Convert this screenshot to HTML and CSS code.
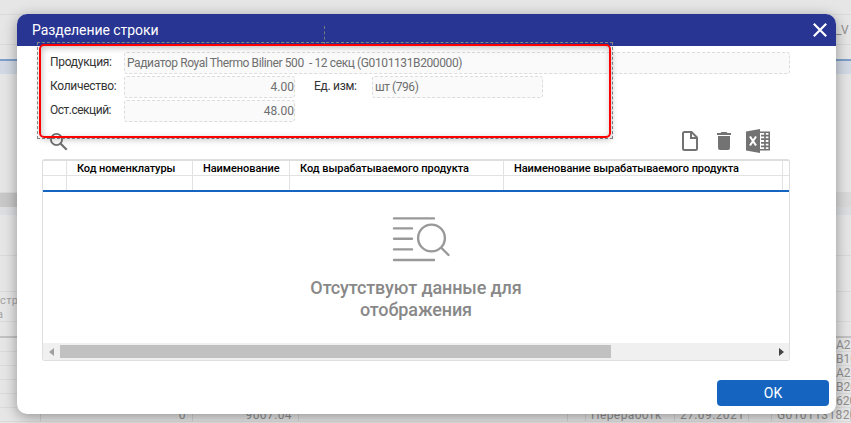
FILE: index.html
```html
<!DOCTYPE html>
<html lang="ru">
<head>
<meta charset="utf-8">
<title>Разделение строки</title>
<link rel="stylesheet" href="styles.css">
</head>
<body>
<div class="page">
  <div class="r r-top"></div>
  <div class="r r-head"><span class="push">_V</span></div>
  <div class="r r-sub"></div>
  <div class="r r-blue"></div>
  <div class="r r-sel"></div>
  <div class="r r-space"></div>
  <div class="r r-scroll"><i></i></div>
  <div class="r r-tint"></div>
  <div class="r r-a"></div>
  <div class="r r-b"></div>
  <div class="r r-c"><p>стр<br><span>а</span></p></div>
  <div class="r r-d"></div>
  <div class="r r-e"><span class="push">A2</span></div>
  <div class="r r-e"><span class="push">B10</span></div>
  <div class="r r-e"><span class="push">A2</span></div>
  <div class="r r-e"><span class="push">B20</span></div>
  <div class="r r-e"><span class="push">620</span></div>
  <div class="r r-last"><span></span><span>0</span><span>9007.04</span><span></span><span></span><span class="start">Переработк</span><span class="start">27.09.2021</span><span></span><span class="start">G0101131820</span></div>
  <div class="r r-end"></div>
</div>

<div class="modal">
  <header class="bar">
    <h1>Разделение строки</h1>
    <svg width="16" height="16" viewBox="0 0 16 16"><path d="M1.8 1.8 14.2 14.2M14.2 1.8 1.8 14.2" stroke="#fff" stroke-width="2.2"/></svg>
  </header>
  <div class="form">
    <div class="line"><label class="l1">Продукция:</label><div class="field wide"><span class="f1">Радиатор Royal Thermo Biliner 500 &nbsp;- 12 секц (G0101131B200000)</span></div></div>
    <div class="line"><label class="l2">Количество:</label><div class="field num">4.00</div><label class="unit">Ед. изм:</label><div class="field half"><span class="f2">шт (796)</span></div></div>
    <div class="line"><label class="l3">Ост.секций:</label><div class="field num">48.00</div></div>
  </div>
  <div class="tools">
    <svg class="search" width="19" height="19" viewBox="0 0 19 19" fill="none" stroke="#707070"><circle cx="6.5" cy="6.5" r="5.6" stroke-width="1.8"/><path d="m10.7 10.7 6 6" stroke-width="2.2"/></svg>
    <svg width="16" height="20" viewBox="0 0 16 20" fill="none" stroke="#737373" stroke-width="2"><path d="M2.5 1H9.5L15 6.5V17.5Q15 19 13.5 19H2.5Q1 19 1 17.5V2.5Q1 1 2.5 1Z"/><path d="M9 1V7H15"/></svg>
    <svg class="trash" width="14" height="18" viewBox="0 0 14 18" fill="#737373"><path d="M0 1H3.5L4.5 0H9.5L10.5 1H14V3H0ZM1 4H13V16Q13 18 11 18H3Q1 18 1 16Z"/></svg>
    <svg class="excel" width="25" height="24" viewBox="0 0 25 24"><path d="M0 2.6 14 0V24L0 21.4Z" fill="#737373"/><path d="M14 3.2H23.2V20.8H14" fill="none" stroke="#737373" stroke-width="1.6"/><path d="M15 6.6H24M15 10.2H24M15 13.8H24M15 17.4H24M19 3V21" stroke="#737373" stroke-width="1.7"/><path d="m4 7.5 6 9M10 7.5l-6 9" stroke="#fff" stroke-width="2.1"/></svg>
  </div>
  <div class="table">
    <div class="cols names"><span></span><span><b class="h1">Код номенклатуры</b></span><span><b class="h2">Наименование</b></span><span><b class="h3">Код вырабатываемого продукта</b></span><span><b class="h4">Наименование вырабатываемого продукта</b></span><span></span></div>
    <div class="cols filters"><span></span><span></span><span></span><span></span><span></span><span></span></div>
    <div class="empty">
      <svg width="58" height="46" viewBox="0 0 58 46" fill="none" stroke="#999" stroke-width="2.4" stroke-linecap="round"><path d="M2 2.4H42M2 12.4H20M2 22.8H20M2 33.4H20M2 44H42M49.5 32l7 7"/><circle cx="39.5" cy="22" r="13.4"/></svg>
      <p>Отсутствуют данные для<br>отображения</p>
    </div>
    <div class="scroll"><svg width="5" height="8" viewBox="0 0 5 8"><path d="M5 0V8L0 4Z" fill="#a0a0a0"/></svg><i></i><svg class="right" width="5" height="8" viewBox="0 0 5 8"><path d="M0 0V8L5 4Z" fill="#444"/></svg></div>
  </div>
  <button>OK</button>
</div>

<div class="guide"></div>
<div class="mark"><div></div></div>
</body>
</html>
```

FILE: styles.css
```css
* { box-sizing: border-box; }
body { margin: 0; width: 851px; height: 423px; overflow: hidden; position: relative; background: #e6e6e6; font-family: Roboto, "Liberation Sans", sans-serif; }
.page { color: #8f8f8f; font-size: 12px; letter-spacing: .4px; }
.r { display: flex; border-bottom: 1px solid #dadada; overflow: hidden; white-space: nowrap; }
.push { margin-left: 836px; }
.r-top { height: 15px; }
.r-head { height: 30px; line-height: 30px; letter-spacing: -.4px; }
.r-sub { height: 14px; border: 0; }
.r-blue { height: 2px; background: #7e9fca; border: 0; }
.r-sel { height: 13px; background: #d2d9e4; border: 0; }
.r-space { height: 119px; }
.r-scroll { height: 14px; background: #dadada; border: 0; }
.r-scroll i { width: 400px; background: #c8c8c8; }
.r-tint { height: 8px; background: #dcdee2; border: 0; }
.r-a { height: 41px; }
.r-b { height: 36px; }
.r-c { height: 30px; }
.r-c p { margin: 2px 0 0; font-size: 11px; line-height: 14px; color: #a2a2a2; }
.r-c span { margin-left: -3px; }
.r-d { height: 16px; border-bottom: 2px solid #c2c2c2; }
.r-e { height: 14px; line-height: 15px; letter-spacing: 0; }
.r-e .push { margin-left: 836px; }
.r-last { height: 14px; line-height: 15px; display: grid; grid-template-columns: 41px 152px 106px 269px 18px 89px 74px 23px 79px; }
.r-last span { border-right: 1px solid #d0d0d0; padding-right: 6px; text-align: right; }
.r-last .start { text-align: left; padding: 0 0 0 5px; }
.r-end { height: 10px; }

.modal { position: absolute; left: 17px; top: 14px; width: 819px; height: 400px; border-radius: 10px; background: #fff; box-shadow: 0 3px 14px rgba(0,0,0,.36); display: flex; flex-direction: column; overflow: hidden; }
.bar { height: 32px; background: #283593; display: flex; justify-content: space-between; align-items: center; padding: 0 8px 0 15px; flex: none; }
h1 { margin: 0; font-weight: 400; font-size: 14px; line-height: 32px; letter-spacing: -.06px; color: #fff; }
.form { padding: 6px 46px 0 33px; display: flex; flex-direction: column; gap: 2px; }
.line { display: flex; height: 22px; color: #333; font-size: 12px; line-height: 20px; white-space: nowrap; }
.line label { width: 74px; flex: none; letter-spacing: -.3px; }
.line .l3 { letter-spacing: -.5px; }
.line .unit { margin-left: 19px; width: 58px; }
.field { border: 1px dashed #dcdcdc; border-radius: 3px; background: #fafafa; color: #6f6f6f; padding-left: 2px; line-height: 21px; }
.wide { flex: 1; }
.f1 { letter-spacing: -.39px; }
.f2 { letter-spacing: -.45px; }
.num { width: 171px; text-align: right; padding: 0; }
.half { width: 171px; }
.tools { height: 37px; padding: 7px 65px 0 33px; display: flex; align-items: flex-start; }
.search { margin: 4px auto 0 0; }
.tools svg:nth-child(2) { margin-top: 2px; }
.trash { margin: 3px 0 0 19px; }
.excel { margin: 0 0 0 15px; }
.table { width: 748px; height: 202px; margin-left: 25px; border: 1px solid #dedede; border-top-width: 2px; border-radius: 3px; overflow: hidden; display: flex; flex-direction: column; flex: none; }
.cols { display: grid; grid-template-columns: 24px 126px 97px 214px 279px 6px; flex: none; }
.cols span { border-right: 1px solid #e2e2e2; padding-left: 10px; white-space: nowrap; }
.cols span:last-child { border: 0; }
.names { height: 15px; border-bottom: 1px solid #e2e2e2; font-size: 11px; line-height: 15px; color: #000; }
.names b { font-weight: 500; letter-spacing: -.07px; }
.names .h3 { letter-spacing: -.03px; }
.filters { height: 16px; border-bottom: 2px solid #1565c0; }
.empty { flex: 1; display: flex; flex-direction: column; align-items: center; padding-top: 24px; }
.empty svg { margin-left: 9px; }
.empty p { margin: 15px 0 0; text-align: center; font-size: 18px; font-weight: 500; line-height: 22px; letter-spacing: -.12px; color: #888; }
.scroll { height: 17px; background: #f0f0f0; display: flex; align-items: center; padding: 0 5px 0 6px; flex: none; }
.scroll i { width: 551px; height: 13px; margin-left: 6px; background: #c1c1c1; }
.right { margin-left: auto; }
button { width: 112px; height: 26px; margin: 19px 7px 0 auto; padding: 0; border: 0; border-radius: 4px; background: #1565c0; color: #fff; font: 400 14px/26px Roboto, sans-serif; flex: none; }

.guide { position: absolute; left: 324px; top: 26px; height: 19px; border-left: 1px dashed #777b7f; }
.mark { position: absolute; left: 37px; top: 42px; width: 576px; height: 97px; border: 1px dashed #888; padding: 1px; }
.mark div { height: 94px; width: 572px; border: 2px solid #f00; border-radius: 5px; box-shadow: 1px 2px 6px rgba(0,0,0,.22), inset 1px 2px 6px rgba(0,0,0,.24); }
```
